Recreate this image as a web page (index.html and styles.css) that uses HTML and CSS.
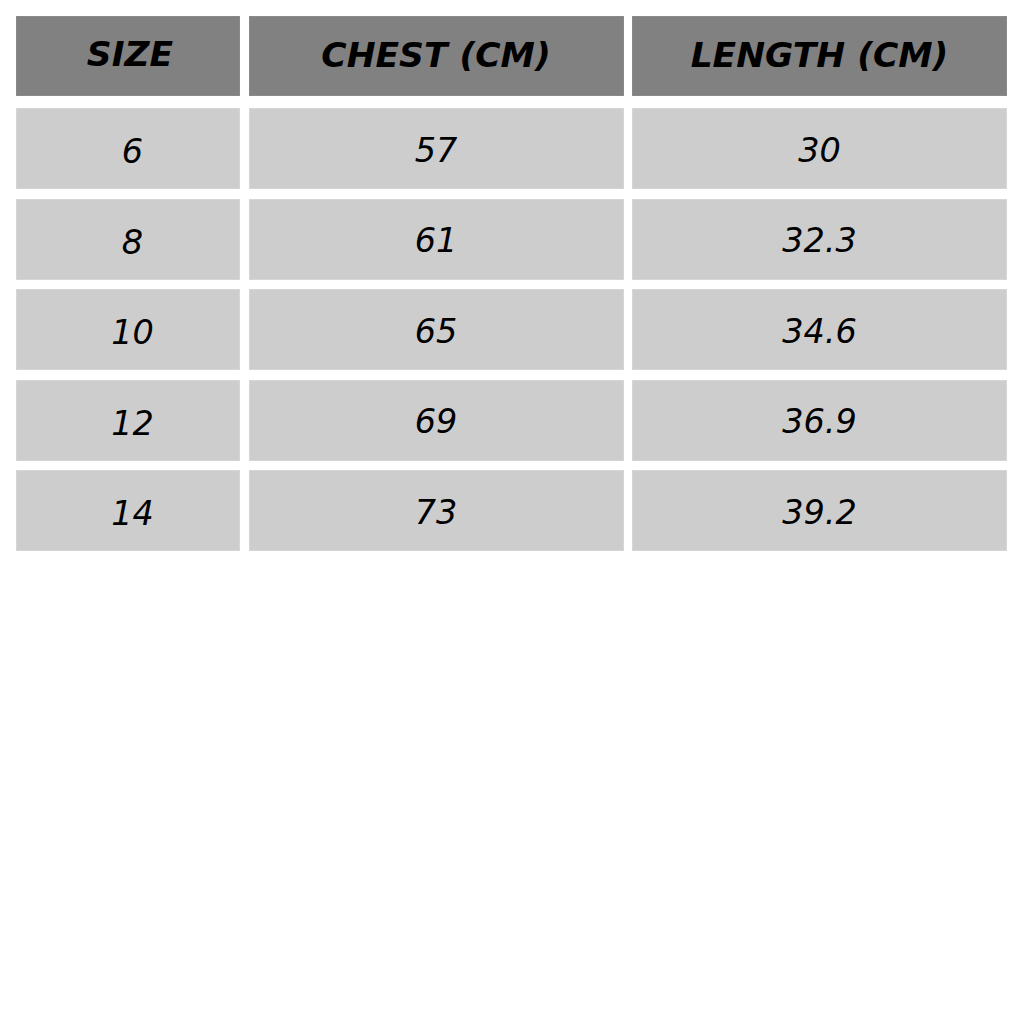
FILE: index.html
```
<!DOCTYPE html>
<html>
<head>
<meta charset="utf-8">
<link rel="stylesheet" href="styles.css">
</head>
<body>
<div class="table">
  <div class="cell head first">SIZE</div>
  <div class="cell head">CHEST (CM)</div>
  <div class="cell head">LENGTH (CM)</div>
  <div class="cell first">6</div><div class="cell">57</div><div class="cell">30</div>
  <div class="cell first">8</div><div class="cell">61</div><div class="cell">32.3</div>
  <div class="cell first">10</div><div class="cell">65</div><div class="cell">34.6</div>
  <div class="cell first">12</div><div class="cell">69</div><div class="cell">36.9</div>
  <div class="cell first">14</div><div class="cell">73</div><div class="cell">39.2</div>
</div>
</body>
</html>
```
FILE: styles.css
```
html, body {
  margin: 0;
  padding: 0;
  background: #ffffff;
}
body {
  padding: 16px 0 0 16px;
  font-family: "DejaVu Sans", Verdana, sans-serif;
}
.table {
  display: grid;
  grid-template-columns: 224px 375px 375px;
  grid-template-rows: 82.5px repeat(5, 81px);
  column-gap: 8.5px;
  row-gap: 9.5px;
}
.cell {
  background: #cdcdcd;
  border: 1px solid #d6d6d6;
  box-sizing: border-box;
  display: flex;
  align-items: center;
  justify-content: center;
  font-style: italic;
  font-size: 33.5px;
  color: #000;
  padding-top: 3px;
}
.first {
  padding-left: 9px;
  padding-top: 6px;
}
.head {
  background: #818181;
  border-color: #8a8a8a;
  font-weight: bold;
  font-size: 34.5px;
  margin-bottom: 2.5px;
  padding-top: 0;
  padding-bottom: 3px;
}
.head.first {
  padding-left: 4px;
  padding-top: 0;
  padding-bottom: 5px;
}
```
